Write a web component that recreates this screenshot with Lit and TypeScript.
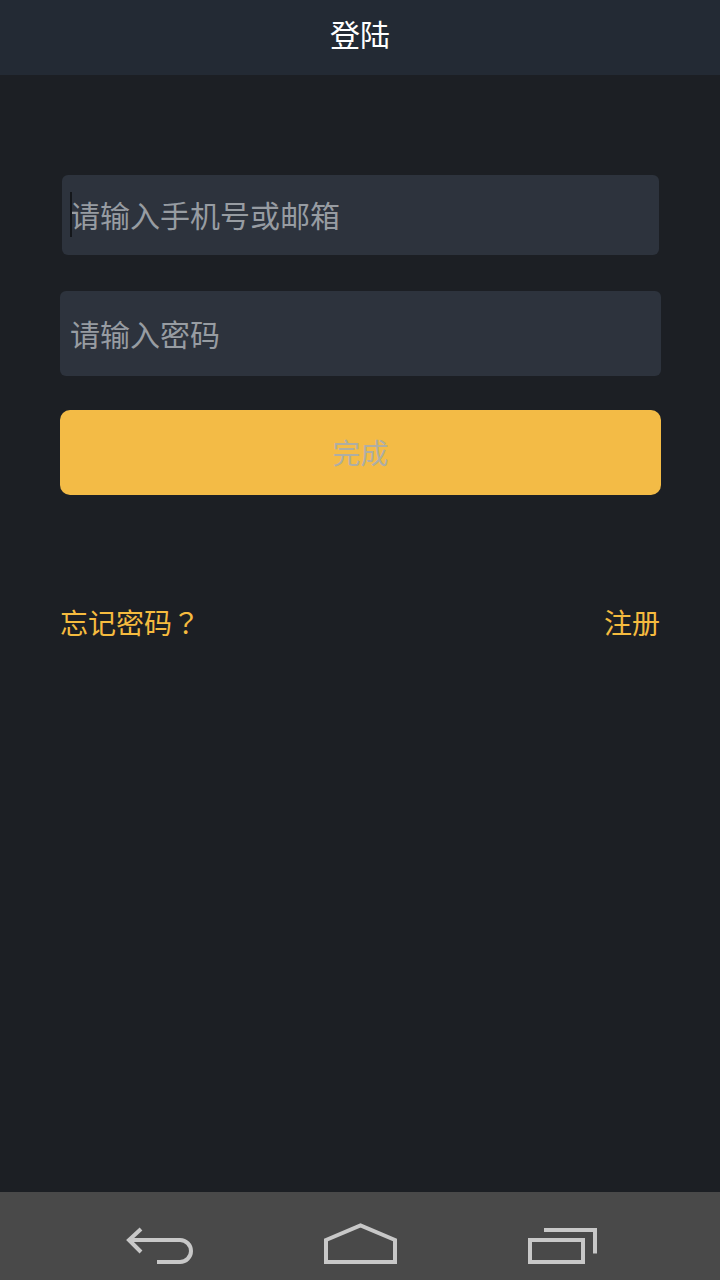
import {html, css, LitElement} from 'lit';
import {customElement} from 'lit/decorators.js';

@customElement('app-root')
export class AppRoot extends LitElement {
  static styles = css`
    :host {
      display: flex;
      flex-direction: column;
      width: 720px;
      height: 1280px;
      background: #1c1f24;
      font-family: "Noto Sans CJK SC", "Noto Sans", sans-serif;
      font-size: 30px;
      overflow: hidden;
    }
    .header {
      height: 75px;
      padding-bottom: 10px;
      box-sizing: border-box;
      background: #232a34;
      color: #fff;
      display: flex;
      align-items: center;
      justify-content: center;
    }
    .content {
      flex: 1;
      display: flex;
      flex-direction: column;
      padding: 100px 59px 0 60px;
    }
    .field {
      position: relative;
      display: flex;
      background: #2d333d;
      border-radius: 6px;
    }
    .field input {
      flex: 1;
      min-width: 0;
      border: none;
      outline: none;
      background: none;
      padding: 0 0 1px 10px;
      font: inherit;
      color: #fff;
    }
    .field input::placeholder {
      color: #979ca2;
      opacity: 1;
    }
    .account {
      height: 80px;
      margin: 0 2px 36px 2px;
    }
    .account input {
      padding: 0 0 3px 8px;
    }
    .password {
      height: 85px;
      margin-bottom: 34px;
    }
    .caret {
      position: absolute;
      left: 8px;
      top: 17px;
      width: 2px;
      height: 45px;
      background: #14171b;
    }
    .submit {
      height: 85px;
      border: none;
      border-radius: 10px;
      background: #f3bb46;
      color: #aeaea4;
      font: inherit;
      font-size: 28px;
      padding: 0 0 1px;
    }
    .links {
      display: flex;
      justify-content: space-between;
      margin: 105px 1px 0 0;
      color: #f5bb3f;
      font-size: 28px;
      line-height: 44px;
    }
    .mark {
      font-family: "Noto Sans CJK TC", sans-serif;
    }
    .navbar {
      height: 88px;
      background: #494949;
      display: grid;
      grid-template-columns: repeat(3, 200px);
      justify-content: center;
      justify-items: center;
      padding-top: 30px;
      box-sizing: border-box;
    }
    .navbar svg {
      display: block;
      fill: none;
      stroke: #c8c8c8;
      stroke-width: 4;
    }
  `;

  render() {
    return html`
      <div class="header">登陆</div>
      <div class="content">
        <div class="field account">
          <input type="text" placeholder="请输入手机号或邮箱" />
          <span class="caret"></span>
        </div>
        <div class="field password">
          <input type="password" placeholder="请输入密码" />
        </div>
        <button class="submit">完成</button>
        <div class="links">
          <span>忘记密码<span class="mark">？</span></span>
          <span>注册</span>
        </div>
      </div>
      <div class="navbar">
        <svg width="80" height="44" viewBox="0 0 80 44">
          <path d="M21 7 9 18 21 30" />
          <path d="M9 18H60a11 11 0 0 1 0 22H37" />
        </svg>
        <svg width="80" height="44" viewBox="0 0 80 44">
          <path d="M6 18 40.500 3.500 75 18V40H6Z" />
        </svg>
        <svg width="80" height="44" viewBox="0 0 80 44">
          <rect x="10" y="18" width="53" height="22" />
          <path d="M24 8H75V31.500" />
        </svg>
      </div>
    `;
  }
}
